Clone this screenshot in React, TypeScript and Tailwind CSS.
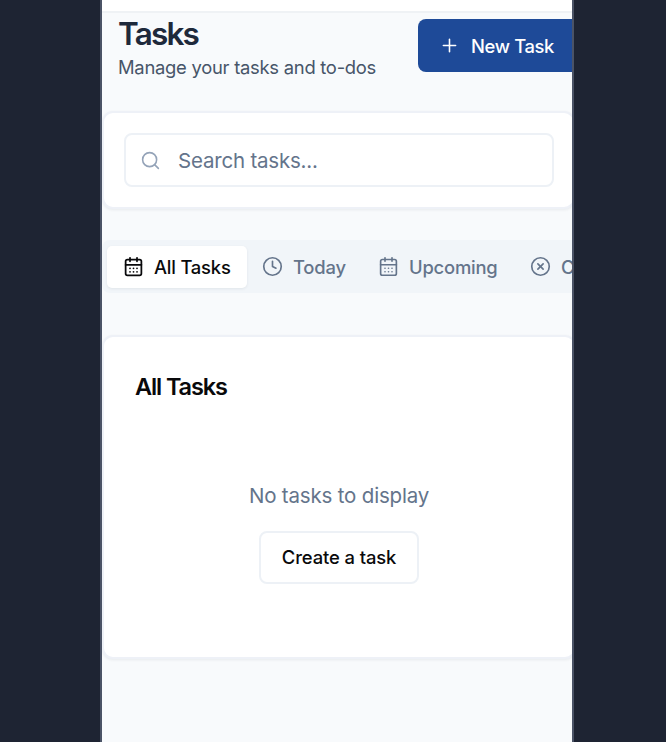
import type { ReactNode } from "react";
import { CalendarDays, CircleX, Clock, Plus, Search } from "lucide-react";

function Tab({ icon, label, active = false, className = "" }: { icon: ReactNode; label: string; active?: boolean; className?: string }) {
  return (
    <button
      className={`flex h-[42px] shrink-0 items-center gap-[10px] rounded-[5px] text-[18.4px] font-medium tracking-[-0.2px] ${
        active ? "bg-white text-[#09090b] shadow-[0_1px_3px_rgba(15,23,42,0.07)]" : "text-[#64748b]"
      } ${className}`}
    >
      {icon}
      <span className="pt-[2px]">{label}</span>
    </button>
  );
}

export default function App() {
  return (
    <div className="h-[742px] w-[666px] overflow-hidden bg-[#1e2433] pl-[100px] font-['Inter','Liberation_Sans',sans-serif]">
      <div className="h-full w-[474px] overflow-hidden border-x-2 border-[#4b5366] bg-[#f8fafc] whitespace-nowrap">
        <div className="h-[13px] border-b-2 border-[#eff2f5] bg-white" />
        <header className="flex h-[98px] items-start pt-[6px] pl-4">
          <div className="w-[300px] shrink-0">
            <h1 className="h-[34px] text-[31.5px] leading-[30px] font-semibold tracking-[-1.8px] text-[#1e293b]">Tasks</h1>
            <p className="text-[18.4px] leading-[28px] tracking-[-0.26px] text-[#475569]">Manage your tasks and to-dos</p>
          </div>
          <button className="flex h-[53px] w-[174px] shrink-0 items-center rounded-[8px] bg-[#1e4a98] pl-[21px] text-[18.4px] font-medium tracking-[-0.35px] text-white">
            <Plus size={21} strokeWidth={1.8} className="mr-[11px]" />
            <span className="pt-[2px]">New Task</span>
          </button>
        </header>
        <section className="h-[98px] w-[473px] rounded-[11px] border-2 border-[#eef1f7] bg-white px-5 pt-5 shadow-[0_1px_3px_rgba(15,23,42,0.07)]">
          <div className="flex h-[54px] w-[430px] items-center rounded-[8px] border-2 border-[#edf1f6] pl-[14px]">
            <Search size={21} strokeWidth={1.8} className="mr-[17px] text-[#94a3b8]" />
            <span className="pt-[3px] text-[20.5px] tracking-[-0.2px] text-[#64748b]">Search tasks...</span>
          </div>
        </section>
        <nav className="mt-[31px] flex h-[53px] w-[700px] items-center rounded-[8px] bg-[#f1f5f9] pl-[5px]">
          <Tab active className="w-[140px] pl-4" icon={<CalendarDays size={21} strokeWidth={2} />} label="All Tasks" />
          <Tab className="w-[115px] pl-[15px]" icon={<Clock size={21} strokeWidth={1.9} />} label="Today" />
          <Tab className="w-[152px] pl-4" icon={<CalendarDays size={21} strokeWidth={1.9} />} label="Upcoming" />
          <Tab className="pl-4" icon={<CircleX size={21} strokeWidth={1.9} />} label="Completed" />
        </nav>
        <main className="mt-[42px] flex h-[324px] w-[474px] flex-col rounded-[11px] border-2 border-[#eef1f7] bg-white shadow-[0_1px_3px_rgba(15,23,42,0.07)]">
          <h2 className="mt-[34px] ml-[31px] text-[23.5px] leading-[32px] font-semibold tracking-[-1.1px] text-[#09090b]">All Tasks</h2>
          <div className="mt-[78px] flex flex-col items-center">
            <p className="text-[20.5px] leading-[30px] tracking-[-0.18px] text-[#64748b]">No tasks to display</p>
            <button className="mt-[20px] h-[53px] w-[160px] rounded-[8px] border-2 border-[#edf1f6] bg-white pt-px text-[18.4px] font-medium tracking-[-0.1px] text-[#09090b]">
              Create a task
            </button>
          </div>
        </main>
      </div>
    </div>
  );
}
